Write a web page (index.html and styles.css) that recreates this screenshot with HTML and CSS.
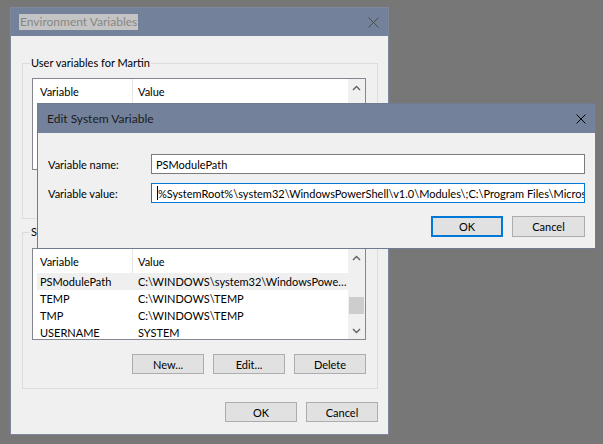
FILE: index.html
```html
<!DOCTYPE html>
<html lang="en">
<head>
  <meta charset="UTF-8">
  <meta name="viewport" content="width=device-width, initial-scale=1.0">
  <title>Environment Variables</title>
  <link rel="stylesheet" href="styles.css">
</head>
<body>
  <!-- Environment Variables (background window) -->
  <div class="window env">
    <div class="titlebar">
      <span class="title title-sel">Environment Variables</span>
      <svg class="close close-dim" width="11" height="11" viewBox="0 0 11 11"><path d="M0.5 0.5L10.5 10.5M10.5 0.5L0.5 10.5"/></svg>
    </div>
    <div class="window-body">
      <fieldset class="group">
        <legend>User variables for Martin</legend>
        <div class="list">
          <div class="list-main">
            <div class="list-head"><span class="col-var">Variable</span><span class="col-val">Value</span></div>
            <div class="row"><span class="col-var">OneDrive</span><span class="col-val">C:\Users\Martin\OneDrive</span></div>
            <div class="row"><span class="col-var">Path</span><span class="col-val">C:\Users\Martin\AppData\Local\…</span></div>
            <div class="row"><span class="col-var">TEMP</span><span class="col-val">C:\Users\Martin\AppData\Local\Temp</span></div>
            <div class="row"><span class="col-var">TMP</span><span class="col-val">C:\Users\Martin\AppData\Local\Temp</span></div>
          </div>
          <div class="scrollbar">
            <div class="sb-btn"><svg width="9" height="6" viewBox="0 0 9 6"><path d="M1 5L4.5 1.5L8 5"/></svg></div>
          </div>
        </div>
        <div class="group-buttons">
          <button class="btn">New...</button>
          <button class="btn">Edit...</button>
          <button class="btn">Delete</button>
        </div>
      </fieldset>

      <fieldset class="group group-system">
        <legend>System variables</legend>
        <div class="list">
          <div class="list-main">
            <div class="list-head"><span class="col-var">Variable</span><span class="col-val">Value</span></div>
            <div class="row row-sel"><span class="col-var">PSModulePath</span><span class="col-val">C:\WINDOWS\system32\WindowsPowe…</span></div>
            <div class="row"><span class="col-var">TEMP</span><span class="col-val">C:\WINDOWS\TEMP</span></div>
            <div class="row"><span class="col-var">TMP</span><span class="col-val">C:\WINDOWS\TEMP</span></div>
            <div class="row"><span class="col-var">USERNAME</span><span class="col-val">SYSTEM</span></div>
          </div>
          <div class="scrollbar">
            <div class="sb-btn"><svg width="9" height="6" viewBox="0 0 9 6"><path d="M1 5L4.5 1.5L8 5"/></svg></div>
            <div class="sb-track"><div class="sb-thumb"></div></div>
            <div class="sb-btn"><svg width="9" height="6" viewBox="0 0 9 6"><path d="M1 1L4.5 4.5L8 1"/></svg></div>
          </div>
        </div>
        <div class="group-buttons">
          <button class="btn">New...</button>
          <button class="btn">Edit...</button>
          <button class="btn">Delete</button>
        </div>
      </fieldset>

      <div class="dialog-buttons">
        <button class="btn">OK</button>
        <button class="btn">Cancel</button>
      </div>
    </div>
  </div>

  <!-- Edit System Variable (modal on top) -->
  <div class="window edit">
    <div class="titlebar">
      <span class="title">Edit System Variable</span>
      <svg class="close" width="10" height="10" viewBox="0 0 10 10"><path d="M0.5 0.5L9.5 9.5M9.5 0.5L0.5 9.5"/></svg>
    </div>
    <div class="edit-body">
      <div class="field-grid">
        <label for="varName">Variable name:</label>
        <div class="input"><span class="input-text">PSModulePath</span></div>
        <label for="varValue">Variable value:</label>
        <div class="input input-focus"><span class="caret"></span><span class="input-text">%SystemRoot%\system32\WindowsPowerShell\v1.0\Modules\;C:\Program Files\Microso</span></div>
      </div>
      <div class="edit-buttons">
        <button class="btn btn-default">OK</button>
        <button class="btn btn-wide">Cancel</button>
      </div>
    </div>
  </div>
</body>
</html>
```

FILE: styles.css
```css
* {
  box-sizing: border-box;
}

body {
  margin: 0;
  position: relative;
  width: 603px;
  height: 444px;
  overflow: hidden;
  background-color: #777777;
  font-family: Lato, "Noto Sans", sans-serif;
  font-size: 11px;
  color: #000;
}

.window {
  background-color: #f0f0f0;
  border: 1px solid #7d899b;
}

.titlebar {
  display: flex;
  align-items: center;
  justify-content: space-between;
  background-color: #73819a;
}

.title {
  font-size: 12px;
}

.close {
  fill: none;
  stroke: #000;
  stroke-width: 1;
}

/* background window */
.env {
  margin: 7px 0 0 10px;
  width: 379px;
  height: 428px;
}

.env .titlebar {
  height: 28px;
  padding: 0 9px 0 8px;
}

.title-sel {
  background-color: #c4c4c4;
  color: #878787;
  line-height: 16px;
  padding: 0 1px;
}

.close-dim {
  stroke: #4a4a4a;
}

.window-body {
  padding: 20px 10px 0 11px;
}

.group {
  margin: 0;
  min-width: 0;
  border: 1px solid #dcdcdc;
  padding: 8px 11px 14px 9px;
}

.group legend {
  margin-left: -2px;
  padding: 0 1px;
  line-height: 14px;
}

.group-system {
  margin-top: 6px;
}

.group-system .list {
  margin-top: 1px;
}

.list {
  display: flex;
  background-color: #fff;
  border: 1px solid #828790;
  height: 92px;
  overflow: hidden;
}

.list-main {
  flex: 1;
  min-width: 0;
  overflow: hidden;
}

.list-head {
  display: flex;
  height: 24px;
  line-height: 26px;
}

.list-head .col-var {
  width: 100px;
  padding-left: 7px;
  border-right: 1px solid #e5e5e5;
}

.list-head .col-val {
  padding-left: 5px;
}

.row {
  display: flex;
  height: 17px;
  line-height: 17px;
  margin-left: 4px;
  white-space: nowrap;
}

.row .col-var {
  flex: none;
  width: 96px;
  padding-left: 3px;
}

.row .col-val {
  flex: none;
  padding-left: 5px;
}

.row-sel {
  background-color: #efefef;
}

.scrollbar {
  flex: none;
  width: 17px;
  display: flex;
  flex-direction: column;
  background-color: #f0f0f0;
}

.sb-btn {
  height: 17px;
  display: flex;
  align-items: center;
  justify-content: center;
}

.sb-btn svg {
  fill: none;
  stroke: #606060;
  stroke-width: 1.4;
}

.sb-track {
  flex: 1;
  padding-top: 31px;
}

.sb-thumb {
  margin: 0 1px;
  height: 17px;
  background-color: #cdcdcd;
}

.btn {
  width: 72px;
  height: 20px;
  padding: 0;
  font-family: inherit;
  font-size: 11px;
  color: #000;
  background-color: #e1e1e1;
  border: 1px solid #adadad;
}

.group-buttons {
  display: flex;
  justify-content: flex-end;
  gap: 9px;
  margin-top: 14px;
}

.dialog-buttons {
  display: flex;
  justify-content: flex-end;
  gap: 9px;
  margin-top: 13px;
}

/* edit dialog on top */
.edit {
  position: absolute;
  left: 37px;
  top: 103px;
  width: 559px;
  height: 146px;
  border-color: #6e7b90;
}

.edit .titlebar {
  height: 29px;
  padding: 0 9px 0 9px;
  color: #1b1b1b;
}

.edit-body {
  padding: 21px 10px 0 10px;
}

.field-grid {
  display: grid;
  grid-template-columns: 103px 1fr;
  row-gap: 9px;
  align-items: center;
}

.input {
  display: flex;
  align-items: center;
  min-width: 0;
  height: 20px;
  padding-left: 4px;
  background-color: #fff;
  border: 1px solid #7a7a7a;
  overflow: hidden;
  white-space: nowrap;
}

.input-text {
  flex: none;
}

.input-focus {
  border-color: #0078d7;
  padding-left: 5px;
}

.caret {
  flex: none;
  width: 1px;
  height: 14px;
  background-color: #000;
}

.edit-buttons {
  display: flex;
  justify-content: flex-end;
  gap: 9px;
  margin-top: 13px;
}

.edit-buttons .btn {
  height: 21px;
}

.btn-default {
  border: 2px solid #0078d7;
}

.btn-wide {
  width: 73px;
}
```
